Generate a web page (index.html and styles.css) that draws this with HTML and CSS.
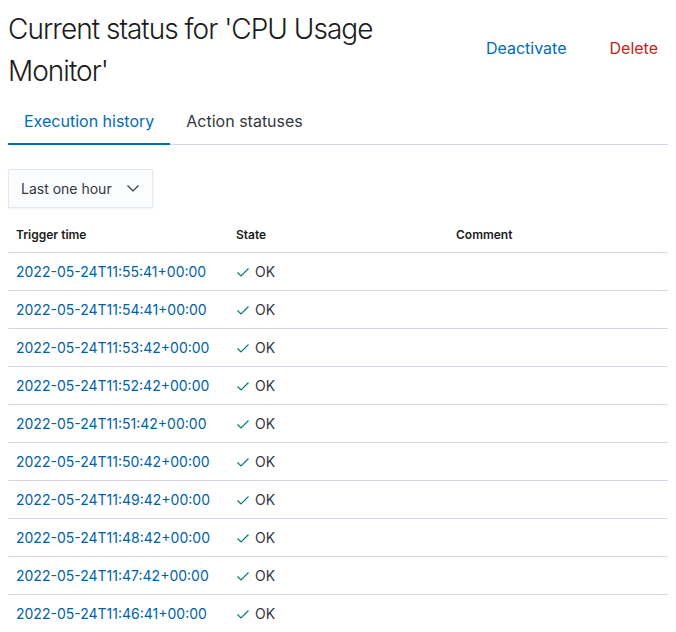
FILE: index.html
```html
<!DOCTYPE html>
<html>
<head>
<meta charset="utf-8">
<link rel="stylesheet" href="styles.css">
</head>
<body>
<div class="header">
  <h1 class="title">Current status for 'CPU Usage Monitor'</h1>
  <div class="actions">
    <button class="btn btn-primary">Deactivate</button>
    <button class="btn btn-danger">Delete</button>
  </div>
</div>
<div class="tabs">
  <div class="tab active">Execution history</div>
  <div class="tab">Action statuses</div>
</div>
<div class="select">
  <span>Last one hour</span>
  <svg class="chev" width="12" height="7" viewBox="0 0 12 7"><polyline points="0.5,0.5 6,6 11.5,0.5" fill="none" stroke="#343741" stroke-width="1.2"/></svg>
</div>
<table class="grid">
  <thead>
    <tr><th>Trigger time</th><th>State</th><th>Comment</th></tr>
  </thead>
  <tbody>
    <tr><td><a class="link">2022-05-24T11:55:41+00:00</a></td><td><span class="state"><svg class="check" width="14" height="14" viewBox="0 0 14 14"><polyline points="1.5,7.5 5,11 12.5,3.5" fill="none" stroke="#017d73" stroke-width="1.2"/></svg>OK</span></td><td></td></tr>
    <tr><td><a class="link">2022-05-24T11:54:41+00:00</a></td><td><span class="state"><svg class="check" width="14" height="14" viewBox="0 0 14 14"><polyline points="1.5,7.5 5,11 12.5,3.5" fill="none" stroke="#017d73" stroke-width="1.2"/></svg>OK</span></td><td></td></tr>
    <tr><td><a class="link">2022-05-24T11:53:42+00:00</a></td><td><span class="state"><svg class="check" width="14" height="14" viewBox="0 0 14 14"><polyline points="1.5,7.5 5,11 12.5,3.5" fill="none" stroke="#017d73" stroke-width="1.2"/></svg>OK</span></td><td></td></tr>
    <tr><td><a class="link">2022-05-24T11:52:42+00:00</a></td><td><span class="state"><svg class="check" width="14" height="14" viewBox="0 0 14 14"><polyline points="1.5,7.5 5,11 12.5,3.5" fill="none" stroke="#017d73" stroke-width="1.2"/></svg>OK</span></td><td></td></tr>
    <tr><td><a class="link">2022-05-24T11:51:42+00:00</a></td><td><span class="state"><svg class="check" width="14" height="14" viewBox="0 0 14 14"><polyline points="1.5,7.5 5,11 12.5,3.5" fill="none" stroke="#017d73" stroke-width="1.2"/></svg>OK</span></td><td></td></tr>
    <tr><td><a class="link">2022-05-24T11:50:42+00:00</a></td><td><span class="state"><svg class="check" width="14" height="14" viewBox="0 0 14 14"><polyline points="1.5,7.5 5,11 12.5,3.5" fill="none" stroke="#017d73" stroke-width="1.2"/></svg>OK</span></td><td></td></tr>
    <tr><td><a class="link">2022-05-24T11:49:42+00:00</a></td><td><span class="state"><svg class="check" width="14" height="14" viewBox="0 0 14 14"><polyline points="1.5,7.5 5,11 12.5,3.5" fill="none" stroke="#017d73" stroke-width="1.2"/></svg>OK</span></td><td></td></tr>
    <tr><td><a class="link">2022-05-24T11:48:42+00:00</a></td><td><span class="state"><svg class="check" width="14" height="14" viewBox="0 0 14 14"><polyline points="1.5,7.5 5,11 12.5,3.5" fill="none" stroke="#017d73" stroke-width="1.2"/></svg>OK</span></td><td></td></tr>
    <tr><td><a class="link">2022-05-24T11:47:42+00:00</a></td><td><span class="state"><svg class="check" width="14" height="14" viewBox="0 0 14 14"><polyline points="1.5,7.5 5,11 12.5,3.5" fill="none" stroke="#017d73" stroke-width="1.2"/></svg>OK</span></td><td></td></tr>
    <tr><td><a class="link">2022-05-24T11:46:41+00:00</a></td><td><span class="state"><svg class="check" width="14" height="14" viewBox="0 0 14 14"><polyline points="1.5,7.5 5,11 12.5,3.5" fill="none" stroke="#017d73" stroke-width="1.2"/></svg>OK</span></td><td></td></tr>
  </tbody>
</table>
</body>
</html>
```
FILE: styles.css
```css
html, body {
  background: #ffffff;
}
body {
  margin: 8px;
  font-family: Inter, "Noto Sans", sans-serif;
  color: #343741;
}
.header {
  display: flex;
  align-items: center;
  justify-content: space-between;
  gap: 40px;
}
.title {
  margin: 0;
  font-size: 28px;
  line-height: 42px;
  font-weight: 300;
  color: #1a1c21;
  max-width: 420px;
  letter-spacing: -0.035em;
}
.actions {
  display: flex;
  align-items: center;
  gap: 23px;
  padding-bottom: 4px;
}
.btn {
  border: none;
  background: none;
  font-family: inherit;
  font-size: 16px;
  line-height: 24px;
  padding: 6px 10px;
  cursor: pointer;
}
.btn-primary { color: #006bb8; }
.btn-danger { color: #bd271e; }
.tabs {
  display: flex;
  margin-top: 5px;
  box-shadow: inset 0 -1px 0 #d3dae6;
}
.tab {
  padding: 12px 16px;
  font-size: 16px;
  line-height: 24px;
  color: #343741;
}
.tab.active {
  color: #006bb8;
  box-shadow: inset 0 -2px 0 #006bb8;
}
.select {
  margin-top: 24px;
  width: 145px;
  height: 39px;
  box-sizing: border-box;
  display: flex;
  align-items: center;
  justify-content: space-between;
  padding: 0 13px 0 12px;
  background: #fbfcfd;
  border: 1px solid #e3e8f1;
  box-shadow: 0 1px 2px rgba(0, 0, 0, 0.06);
  font-size: 14px;
  color: #343741;
}
.chev { display: block; }
.grid {
  margin-top: 10px;
  width: 100%;
  border-collapse: collapse;
  table-layout: fixed;
}
.grid th {
  text-align: left;
  font-size: 12px;
  line-height: 18px;
  font-weight: 600;
  color: #1a1c21;
  padding: 8px;
  border-bottom: 1px solid #d3dae6;
}
.grid td {
  font-size: 14px;
  line-height: 21px;
  height: 21px;
  padding: 8px;
  border-bottom: 1px solid #d3dae6;
  color: #343741;
}
.link {
  display: block;
  color: #0061a6;
  text-decoration: none;
}
.state {
  display: flex;
  align-items: center;
  gap: 5px;
  height: 21px;
}
.check { display: block; }
```
